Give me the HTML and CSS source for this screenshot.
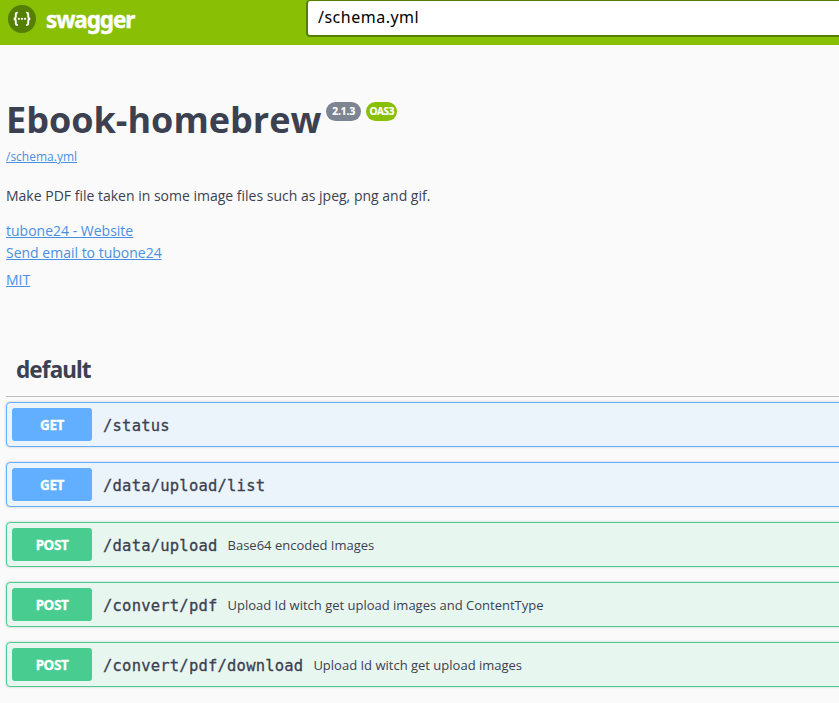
FILE: index.html
```html
<!DOCTYPE html>
<html lang="en">
<head>
<meta charset="utf-8">
<title>Swagger UI</title>
<link rel="stylesheet" href="styles.css">
</head>
<body>
<header class="topbar">
  <a class="brand">
    <svg class="logo" viewBox="0 0 28 28" width="28" height="28" aria-hidden="true">
      <circle cx="14" cy="14" r="14" fill="#547f00"/>
      <path d="M9.8 7.6H9.2Q7.8 7.6 7.8 9V11.2Q7.8 13.7 5.7 13.8Q7.8 13.9 7.8 16.4V18.6Q7.8 20 9.2 20H9.8M18.2 7.6H18.8Q20.2 7.6 20.2 9V11.2Q20.2 13.7 22.3 13.8Q20.2 13.9 20.2 16.4V18.6Q20.2 20 18.8 20H18.2" fill="none" stroke="#fff" stroke-width="1.9"/>
      <g fill="#fff"><circle cx="10.9" cy="13.8" r="1.15"/><circle cx="14" cy="13.8" r="1.15"/><circle cx="17.1" cy="13.8" r="1.15"/></g>
    </svg>
    <span class="brand-name">swagger</span>
  </a>
  <div class="url-box">/schema.yml</div>
</header>
<main>
  <section class="info">
    <h1 class="title"><span class="title-text">Ebook-homebrew</span><span class="badge version">2.1.3</span><span class="badge oas">OAS3</span></h1>
    <a class="link schema">/schema.yml</a>
    <p class="description">Make PDF file taken in some image files such as jpeg, png and gif.</p>
    <a class="link contact">tubone24 - Website</a>
    <a class="link contact">Send email to tubone24</a>
    <a class="link license">MIT</a>
  </section>
  <section class="operations">
    <h2 class="tag">default</h2>
    <div class="op get"><span class="method">GET</span><span class="path">/status</span></div>
    <div class="op get"><span class="method">GET</span><span class="path">/data/upload/list</span></div>
    <div class="op post"><span class="method">POST</span><span class="path">/data/upload</span><span class="summary">Base64 encoded Images</span></div>
    <div class="op post"><span class="method">POST</span><span class="path">/convert/pdf</span><span class="summary">Upload Id witch get upload images and ContentType</span></div>
    <div class="op post"><span class="method">POST</span><span class="path">/convert/pdf/download</span><span class="summary">Upload Id witch get upload images</span></div>
  </section>
</main>
</body>
</html>
```
FILE: styles.css
```css
* { box-sizing: border-box; }
body {
  margin: 0;
  background: #fafafa;
  color: #3b4151;
  font-family: "Open Sans", sans-serif;
  overflow: hidden;
}
.topbar {
  display: flex;
  align-items: flex-start;
  height: 45px;
  background: #89bf04;
}
.brand {
  display: flex;
  flex: 0 0 306px;
  gap: 10px;
  padding: 5px 0 0 8px;
}
.logo { flex: none; }
.brand-name {
  color: #fff;
  font: 700 22.5px/29px "Noto Sans", sans-serif;
  letter-spacing: -1.1px;
  -webkit-text-stroke: 0.4px #fff;
}
.url-box {
  flex: 1;
  height: 37px;
  margin-right: -10px;
  padding-left: 10px;
  border: 2px solid #547f00;
  border-top-width: 1px;
  border-radius: 4px 0 0 4px;
  background: #fff;
  color: #000;
  font: 16px/32px "Noto Sans", sans-serif;
  letter-spacing: 0.5px;
}
.info {
  display: flex;
  flex-direction: column;
  align-items: flex-start;
  padding: 50px 6px 0;
}
.title {
  display: flex;
  align-items: flex-start;
  gap: 5px;
  margin: 0;
  height: 52px;
  font-size: 36px;
  line-height: 50px;
}
.badge {
  height: 19px;
  margin-top: 7px;
  border-radius: 10px;
  color: #fff;
  font: 700 10px/19px "Open Sans", sans-serif;
  text-align: center;
  -webkit-text-stroke: 0.2px #fff;
}
.version { width: 35px; background: #7d8492; }
.oas { width: 31px; background: #89bf04; letter-spacing: -0.4px; }
.link { color: #4990e2; text-decoration: underline; font-size: 14px; line-height: 22px; }
.schema { font-size: 12px; line-height: 20px; }
.description { margin: 18px 0 13px; font-size: 14px; line-height: 22px; }
.license { margin-top: 5px; }
.operations { padding: 59px 0 0 6px; }
.tag {
  height: 47px;
  margin: 0 0 5px;
  padding-left: 10px;
  border-bottom: 1px solid #bbbcc0;
  font: 700 22.5px/39px "Noto Sans", sans-serif;
  letter-spacing: -0.9px;
}
.op {
  display: flex;
  align-items: center;
  height: 45px;
  margin: 0 -10px 15px 0;
  padding: 0 5px;
  border: 1px solid;
  border-radius: 4px;
  box-shadow: 0 0 3px rgba(0, 0, 0, .19);
}
.get { border-color: #61affe; background: #ebf3fb; }
.post { border-color: #49cc90; background: #e8f6f0; }
.method {
  width: 80px;
  height: 33px;
  border-radius: 3px;
  color: #fff;
  font: 700 13.5px/34px "Noto Sans", sans-serif;
  letter-spacing: -0.4px;
  text-align: center;
  -webkit-text-stroke: 0.3px #fff;
}
.get .method { background: #61affe; }
.post .method { background: #49cc90; }
.path {
  margin: 2px 0 0 11px;
  font: 15.5px/20px "DejaVu Sans Mono", monospace;
  letter-spacing: 0.21px;
  -webkit-text-stroke: 0.3px #3b4151;
}
.summary { margin-left: 10px; font-size: 13px; line-height: 20px; white-space: nowrap; }
```
